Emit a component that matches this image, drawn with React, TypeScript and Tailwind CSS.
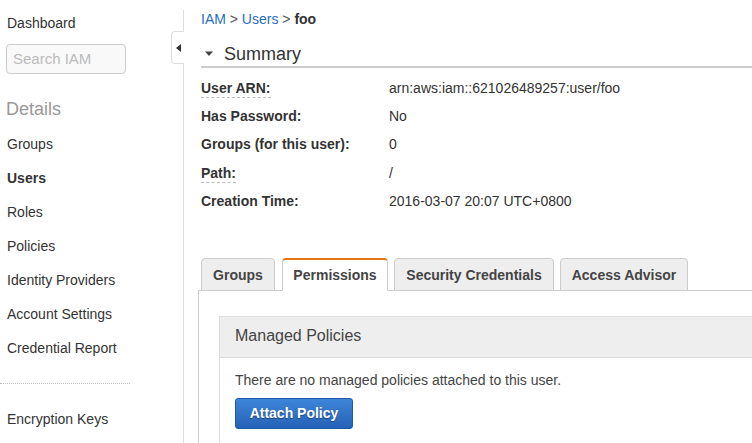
import React from "react";

const font = { fontFamily: '"Liberation Sans", Arial, Helvetica, sans-serif' };

function NavItem({ label, bold }: { label: string; bold?: boolean }) {
  return (
    <div className={`h-[34px] leading-[34px] pl-[7px] text-[14px] text-[#333] ${bold ? "font-bold" : ""}`}>{label}</div>
  );
}

function Row({ label, value, dashed }: { label: string; value: string; dashed?: boolean }) {
  return (
    <div className="flex h-[28.3px] items-center text-[14px] text-[#333]">
      <div className="w-[188px] font-bold">
        <span className={dashed ? "border-b border-dashed border-[#bbb] pb-[1px]" : ""}>{label}</span>
      </div>
      <div>{value}</div>
    </div>
  );
}

function Tab({ label, w, active }: { label: string; w: string; active?: boolean }) {
  return (
    <div
      className={`${w} h-[33px] -mb-px flex items-center justify-center pt-[1px] rounded-t-[4px] text-[14px] font-bold text-[#444] border border-[#ccc] ${
        active ? "bg-white border-t-2 border-t-[#e47911] border-b-white" : "bg-[#eee]"
      }`}
    >
      {label}
    </div>
  );
}

export default function App() {
  return (
    <div className="w-[752px] h-[443px] overflow-hidden bg-white flex relative" style={font}>
      {/* Sidebar */}
      <div className="w-[183px] shrink-0 flex flex-col">
        <div className="mt-[13px] leading-[20px] pl-[7px] text-[14px] text-[#333]">Dashboard</div>
        <div className="mt-[11px] ml-[6px] w-[120px] h-[30px] rounded-[4px] border border-[#ccc] bg-[#f9f9f9] flex items-center pl-[6px] text-[15px] text-[#bbb]">
          Search IAM
        </div>
        <div className="mt-[24px] leading-[22px] pl-[6px] text-[18px] text-[#999]">Details</div>
        <div className="mt-[7px]">
          <NavItem label="Groups" />
          <NavItem label="Users" bold />
          <NavItem label="Roles" />
          <NavItem label="Policies" />
          <NavItem label="Identity Providers" />
          <NavItem label="Account Settings" />
          <NavItem label="Credential Report" />
        </div>
        <div className="mt-[18px] w-[130px] border-t border-dotted border-[#bbb]" />
        <div className="mt-[18px]">
          <NavItem label="Encryption Keys" />
        </div>
      </div>
      {/* Divider */}
      <div className="w-px shrink-0 mt-[10px] bg-[#ddd]" />
      {/* Collapse tab */}
      <div className="absolute left-[171px] top-[31px] w-[13px] h-[33px] bg-white border border-r-0 border-[#ddd] rounded-l-[4px] flex items-center justify-center">
        <svg width="5" height="8" viewBox="0 0 5 8">
          <path d="M5 0 L0 4 L5 8 Z" fill="#333" />
        </svg>
      </div>
      {/* Main */}
      <div className="flex-1 pl-[17px] flex flex-col min-w-0">
        <div className="mt-[9px] leading-[20px] text-[14px]">
          <span className="text-[#2a6ebb]">IAM</span>
          <span className="text-[#555]"> &gt; </span>
          <span className="text-[#2a6ebb]">Users</span>
          <span className="text-[#555]"> &gt; </span>
          <span className="font-bold text-[#333]">foo</span>
        </div>
        <div className="mt-[14px] h-[25px] flex items-center border-b-2 border-[#ccc] pb-[1px]">
          <svg width="10" height="6" viewBox="0 0 10 6" className="ml-[3px] mr-[10px]">
            <path d="M1 0.5 L9 0.5 L5 5 Z" fill="#444" />
          </svg>
          <span className="text-[18px] text-[#333] leading-[24px]">Summary</span>
        </div>
        <div className="mt-[6px]">
          <Row label="User ARN:" value="arn:aws:iam::621026489257:user/foo" dashed />
          <Row label="Has Password:" value="No" />
          <Row label="Groups (for this user):" value="0" />
          <Row label="Path:" value="/" dashed />
          <Row label="Creation Time:" value="2016-03-07 20:07 UTC+0800" />
        </div>
        {/* Tabs */}
        <div className="mt-[43px] -ml-[3px] w-[580px]">
          <div className="flex pl-[3px] gap-[6px] border-b border-[#ccc]">
            <Tab label="Groups" w="w-[74px] mr-[1px]" />
            <Tab label="Permissions" w="w-[106px]" active />
            <Tab label="Security Credentials" w="w-[160px]" />
            <Tab label="Access Advisor" w="w-[128px]" />
          </div>
          <div className="border-l border-[#ccc] pl-[20px] pt-[25px] h-[200px]">
            <div className="border border-[#ddd] border-r-0 w-[560px]">
              <div className="h-[41px] bg-[#eee] border-b border-[#ddd] flex items-center pl-[15px] pb-[2px] text-[16px] text-[#444]">
                Managed Policies
              </div>
              <div className="pl-[15px] pt-[12px] pb-[20px]">
                <div className="leading-[20px] text-[14px] text-[#444]">There are no managed policies attached to this user.</div>
                <button
                  className="mt-[8px] w-[118px] h-[31px] rounded-[3px] border border-[#1f5aa6] bg-gradient-to-b from-[#3d86d9] to-[#2561b7] text-white text-[14px] font-bold"
                  style={{ textShadow: "0 1px 1px rgba(0,0,0,0.4)" }}
                >
                  Attach Policy
                </button>
              </div>
            </div>
          </div>
        </div>
      </div>
    </div>
  );
}
